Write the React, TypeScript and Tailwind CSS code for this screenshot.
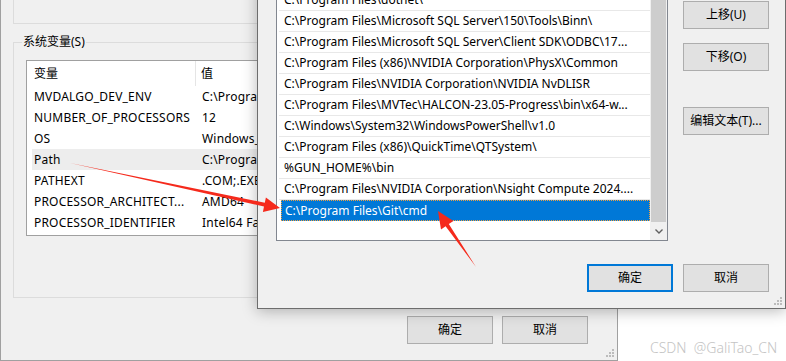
const ui = { fontFamily: '"Noto Sans", "Noto Sans CJK SC", sans-serif' };

const sysVars: [string, string][] = [
  ["MVDALGO_DEV_ENV", "C:\\Program Files\\MVTec"],
  ["NUMBER_OF_PROCESSORS", "12"],
  ["OS", "Windows_NT"],
  ["Path", "C:\\Program Files\\Git"],
  ["PATHEXT", ".COM;.EXE;.BAT"],
  ["PROCESSOR_ARCHITECT...", "AMD64"],
  ["PROCESSOR_IDENTIFIER", "Intel64 Family 6"],
];

const paths = [
  "%SystemRoot%\\system32",
  "C:\\Program Files\\dotnet\\",
  "C:\\Program Files\\Microsoft SQL Server\\150\\Tools\\Binn\\",
  "C:\\Program Files\\Microsoft SQL Server\\Client SDK\\ODBC\\17...",
  "C:\\Program Files (x86)\\NVIDIA Corporation\\PhysX\\Common",
  "C:\\Program Files\\NVIDIA Corporation\\NVIDIA NvDLISR",
  "C:\\Program Files\\MVTec\\HALCON-23.05-Progress\\bin\\x64-w...",
  "C:\\Windows\\System32\\WindowsPowerShell\\v1.0",
  "C:\\Program Files (x86)\\QuickTime\\QTSystem\\",
  "%GUN_HOME%\\bin",
  "C:\\Program Files\\NVIDIA Corporation\\Nsight Compute 2024....",
  "C:\\Program Files\\Git\\cmd",
];

const WinButton = ({ label, focused = false }: { label: string; focused?: boolean }) => (
  <div
    className={
      "w-[86px] h-[28px] flex items-center justify-center bg-[#e1e1e1] text-[12px] leading-[16px] text-black " +
      (focused ? "border-2 border-[#0078d7]" : "border border-[#adadad]")
    }
  >
    {label}
  </div>
);

const Grip = () => (
  <svg width="8" height="8" viewBox="0 0 8 8">
    <rect x="6" y="0" width="2" height="2" fill="#bcbcbc" />
    <rect x="3" y="3" width="2" height="2" fill="#bcbcbc" />
    <rect x="6" y="3" width="2" height="2" fill="#bcbcbc" />
    <rect x="0" y="6" width="2" height="2" fill="#bcbcbc" />
    <rect x="3" y="6" width="2" height="2" fill="#bcbcbc" />
    <rect x="6" y="6" width="2" height="2" fill="#bcbcbc" />
  </svg>
);

const EnvWindow = () => (
  <div className="absolute left-0 top-[-100px] w-[618px] h-[461px] bg-[#f0f0f0] border-l border-r border-b border-[#a0a0a0] flex flex-col pl-[12px]">
    <div className="w-[592px] h-[124px] border-l border-r border-b border-[#dcdcdc]" />
    <div className="relative mt-[18px] w-[592px] h-[256px] border border-[#dcdcdc] pl-[12px] pt-[17px]">
      <span className="absolute left-[8px] top-[-10px] bg-[#f0f0f0] px-px text-[12px] leading-[18px] text-black">
        系统变量(S)
      </span>
      <div className="w-[560px] h-[176px] border border-[#a0a0a0] bg-white flex flex-col text-[12px] leading-[16px] text-black">
        <div className="flex h-[25px] items-center">
          <div className="w-[169px] h-full flex items-center pl-[7px] border-r border-[#e5e5e5]">变量</div>
          <div className="pl-[5px]">值</div>
        </div>
        {sysVars.map(([name, value]) => (
          <div
            key={name}
            className={
              "flex h-[21px] items-center ml-[5px] tracking-[0.2px] " +
              (name === "Path" ? "bg-[#ededed]" : "")
            }
          >
            <div className="w-[170px] pl-[2px] whitespace-nowrap overflow-hidden">{name}</div>
            <div className="whitespace-nowrap">{value}</div>
          </div>
        ))}
      </div>
    </div>
    <div className="flex justify-end gap-[9px] mt-[18px] pr-[29px]">
      <WinButton label="确定" />
      <WinButton label="取消" />
    </div>
    <div className="absolute right-[3px] bottom-[3px]">
      <Grip />
    </div>
  </div>
);

const EditWindow = () => (
  <div className="absolute left-[257px] top-[-43px] w-[529px] h-[352px] bg-[#f0f0f0] border border-[#6d6d6d] shadow-[0_2px_14px_rgba(0,0,0,0.28)] flex flex-col pl-[18px] pr-[16px] pt-[10px]">
    <div className="flex gap-[15px]">
      <div className="w-[392px] h-[273px] border border-[#828790] bg-white flex text-[12px] leading-[16px] text-black">
        <div className="w-[373px] pl-[2px] flex flex-col">
          {paths.map((p, i) => {
            const selected = i === paths.length - 1;
            return (
              <div
                key={p}
                className={
                  "h-[21px] flex items-center whitespace-nowrap overflow-hidden " +
                  (selected
                    ? "bg-[#0078d7] text-white border border-dotted border-[#f0a040] ml-[2px] pl-[3px]"
                    : "border-b border-[#e8e8e8] pl-[5px]")
                }
              >
                {p}
              </div>
            );
          })}
        </div>
        <div className="w-[17px] h-full flex flex-col bg-[#f0f0f0]">
          <div className="h-[253px] mx-px bg-[#cdcdcd]" />
          <div className="flex-1 flex items-center justify-center">
            <svg width="8" height="5" viewBox="0 0 8 5">
              <path d="M0.5 0.5 L4 4 L7.5 0.5" stroke="#606060" strokeWidth="1.4" fill="none" />
            </svg>
          </div>
        </div>
      </div>
      <div className="flex flex-col text-[12px]">
        <div className="mt-[33px]">
          <WinButton label="上移(U)" />
        </div>
        <div className="mt-[14px]">
          <WinButton label="下移(O)" />
        </div>
        <div className="mt-[36px]">
          <WinButton label="编辑文本(T)..." />
        </div>
      </div>
    </div>
    <div className="flex justify-end gap-[10px] mt-[23px]">
      <WinButton label="确定" focused />
      <WinButton label="取消" />
    </div>
    <div className="absolute right-[3px] bottom-[3px]">
      <Grip />
    </div>
  </div>
);

const Arrows = () => (
  <svg className="absolute inset-0 pointer-events-none" width="786" height="361" viewBox="0 0 786 361">
    <polygon
      points="70,163 264,206.6 262.9,212 280,208 265.9,197.6 264.8,202.7"
      fill="#f52a1c"
    />
    <polygon
      points="476,267 448.8,224 453.4,221 438,211 441,229.6 445.6,226.2"
      fill="#f52a1c"
    />
  </svg>
);

export default function App() {
  return (
    <div className="relative w-[786px] h-[361px] overflow-hidden bg-white" style={ui}>
      <EnvWindow />
      <EditWindow />
      <div className="absolute left-[650px] top-[337px] text-[14px] font-light text-[#c4c4c4] whitespace-nowrap">
        CSDN&nbsp;&nbsp;@GaliTao_CN
      </div>
      <Arrows />
    </div>
  );
}
